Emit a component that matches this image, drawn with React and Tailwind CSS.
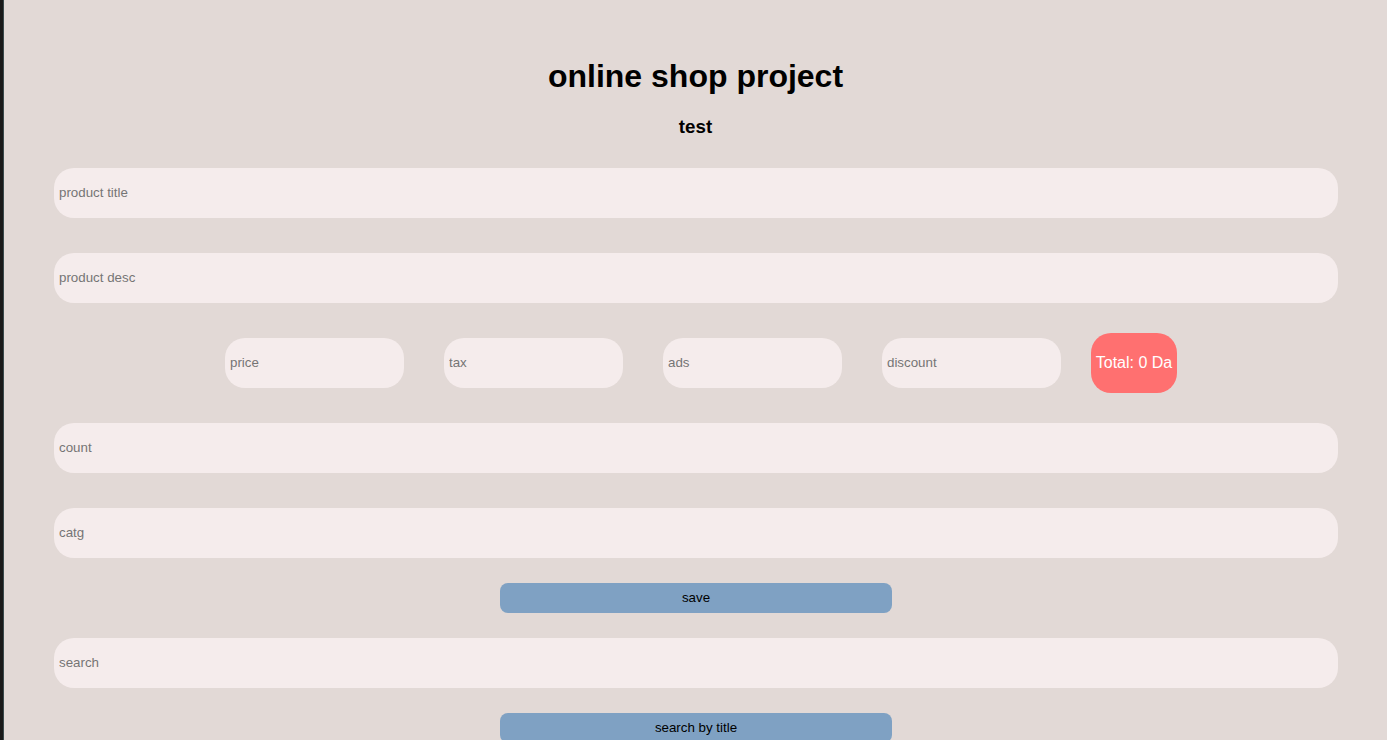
import React from "react";

const inputCls =
  "block w-full h-[50px] rounded-[20px] bg-[#f5ecec] border-0 outline-none px-[5px] pb-px text-[13.33px] text-black placeholder:text-[#757575] font-['Liberation_Sans',Arial,sans-serif]";

const smallInputCls =
  "block w-[179px] h-[50px] rounded-[20px] bg-[#f5ecec] border-0 outline-none px-[5px] pb-px text-[13.33px] text-black placeholder:text-[#757575] font-['Liberation_Sans',Arial,sans-serif]";

export default function App() {
  return (
    <div className="flex min-h-[740px] w-full bg-[#e2d9d6] font-['Liberation_Sans',Arial,sans-serif] overflow-hidden">
      <div className="w-[3px] shrink-0 bg-[#1a1a1a]" />
      <div className="w-px shrink-0 bg-[#3a4a4c]" />
      <div className="flex-1 flex flex-col">
        <h1 className="pt-[58px] text-center text-[32px] leading-[37px] font-bold text-black">
          online shop project
        </h1>
        <h3 className="mt-[21px] text-center text-[18.72px] leading-[22px] font-bold text-black">
          test
        </h3>
        <div className="ml-[50px] mr-[49px] mt-[30px] flex flex-col">
          <input className={inputCls} placeholder="product title" />
          <input className={inputCls + " mt-[35px]"} placeholder="product desc" />
          <div className="mt-[30px] flex items-center justify-center pl-[10px]">
            <input className={smallInputCls} placeholder="price" />
            <input className={smallInputCls + " ml-[40px]"} placeholder="tax" />
            <input className={smallInputCls + " ml-[40px]"} placeholder="ads" />
            <input className={smallInputCls + " ml-[40px]"} placeholder="discount" />
            <div className="ml-[30px] h-[60px] w-[86px] rounded-[20px] bg-[#ff7070] flex items-center justify-center text-white text-[16px] whitespace-nowrap">
              Total: 0 Da
            </div>
          </div>
          <input className={inputCls + " mt-[30px]"} placeholder="count" />
          <input className={inputCls + " mt-[35px]"} placeholder="catg" />
          <button className="mt-[25px] mx-auto w-[392px] h-[30px] rounded-[8px] bg-[#7fa1c3] text-black text-[13.33px]">
            save
          </button>
          <input className={inputCls + " mt-[25px]"} placeholder="search" />
          <button className="mt-[25px] mx-auto w-[392px] h-[30px] rounded-[8px] bg-[#7fa1c3] text-black text-[13.33px]">
            search by title
          </button>
        </div>
      </div>
    </div>
  );
}
